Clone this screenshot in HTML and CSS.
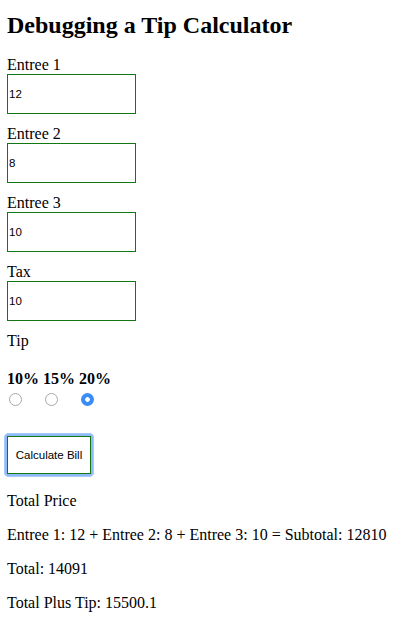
FILE: index.html
```html
<!DOCTYPE html>
<html>
<head>
<meta charset="utf-8">
<title>Debugging a Tip Calculator</title>
<link rel="stylesheet" href="styles.css">
</head>
<body>
<div class="page">
  <h1 class="title">Debugging a Tip Calculator</h1>
  <div class="field">
    <label class="label">Entree 1</label>
    <input class="box" type="text" value="12">
  </div>
  <div class="field">
    <label class="label">Entree 2</label>
    <input class="box" type="text" value="8">
  </div>
  <div class="field">
    <label class="label">Entree 3</label>
    <input class="box" type="text" value="10">
  </div>
  <div class="field">
    <label class="label">Tax</label>
    <input class="box" type="text" value="10">
  </div>
  <div class="label tip-label">Tip</div>
  <div class="tips">
    <span class="pct">10%</span>
    <span class="pct">15%</span>
    <span class="pct">20%</span>
    <span class="cell"><input class="radio" type="radio" name="tip"></span>
    <span class="cell"><input class="radio" type="radio" name="tip"></span>
    <span class="cell"><input class="radio" type="radio" name="tip" checked></span>
  </div>
  <div class="ring"><button class="calc" type="button">Calculate Bill</button></div>
  <div class="results">
    <p class="line">Total Price</p>
    <p class="line">Entree 1: 12 + Entree 2: 8 + Entree 3: 10 = Subtotal: 12810</p>
    <p class="line">Total: 14091</p>
    <p class="line">Total Plus Tip: 15500.1</p>
  </div>
</div>
</body>
</html>
```

FILE: styles.css
```css
html, body {
  margin: 0;
  padding: 0;
  background: #ffffff;
}
body {
  font-family: "Liberation Serif", "Times New Roman", serif;
  font-size: 16px;
  color: #000;
}
.page {
  padding: 0 0 0 7px;
}
.title {
  font-size: 24px;
  font-weight: bold;
  line-height: 28px;
  margin: 11px 0 17px;
}
.field {
  display: flex;
  flex-direction: column;
  align-items: flex-start;
  margin-bottom: 11px;
}
.label {
  display: block;
  font-size: 16px;
  line-height: 18px;
}
.box {
  box-sizing: border-box;
  width: 129px;
  height: 40px;
  margin: 0;
  padding: 0 1px;
  border: 1px solid #0b7a0b;
  border-color: #137813;
  background: #fff;
  font-family: "Liberation Sans", Arial, sans-serif;
  font-size: 11.5px;
  color: #000;
  outline: none;
}
.tip-label {
  margin: 0 0 20px;
}
.tips {
  display: grid;
  grid-template-columns: 36px 36px 36px;
  row-gap: 5px;
}
.pct {
  font-weight: bold;
  font-size: 16px;
  line-height: 18px;
}
.cell {
  display: block;
  height: 13px;
  padding-left: 2px;
}
.radio {
  appearance: none;
  -webkit-appearance: none;
  box-sizing: border-box;
  display: block;
  width: 13px;
  height: 13px;
  margin: 0;
  border: 1px solid #a9a9a9;
  border-radius: 50%;
  background: #fff;
}
.radio:checked {
  border: none;
  background: radial-gradient(circle, #ffffff 0 2px, #3a8df6 2.6px);
}
.ring {
  display: inline-block;
  margin: 27px 0 0 -3px;
  padding: 3px;
  border-radius: 5px;
  background: #8fbaf8;
  box-shadow: inset 0 0 0 1px #a8cafb;
}
.calc {
  display: block;
  box-sizing: border-box;
  width: 84px;
  height: 38px;
  margin: 0;
  padding: 0;
  border: 1px solid #137813;
  background: #fff;
  font-family: "Liberation Sans", Arial, sans-serif;
  font-size: 11.5px;
  color: #000;
}
.results {
  margin-top: 15px;
}
.line {
  margin: 0 0 16px;
  line-height: 18px;
}
```
